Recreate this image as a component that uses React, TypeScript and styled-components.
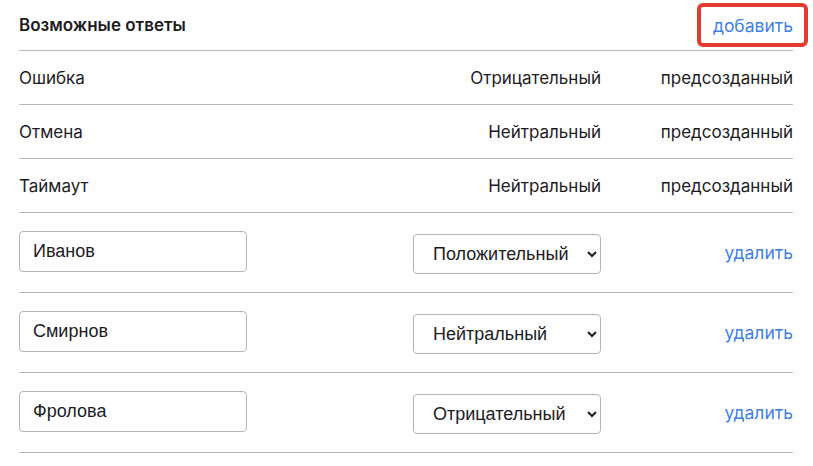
import styled, { createGlobalStyle } from 'styled-components'

const GlobalStyle = createGlobalStyle`
  html, body {
    margin: 0;
    padding: 0;
    background: #ffffff;
  }
  body {
    font-family: Inter, 'Noto Sans', sans-serif;
    color: #1c1c1f;
  }
`

const Page = styled.div`
  padding: 0 20px 0 19px;
`

const Header = styled.div`
  height: 51px;
  display: flex;
  align-items: center;
  justify-content: space-between;
  border-bottom: 1px solid #b6b6be;
  box-sizing: border-box;
`

const Title = styled.h2`
  margin: 0;
  font-size: 17px;
  font-weight: 600;
  letter-spacing: 0;
`

const LinkButton = styled.button<{ highlighted?: boolean }>`
  position: relative;
  background: none;
  border: none;
  padding: 0;
  font-family: Inter, 'Noto Sans', sans-serif;
  font-size: 17.5px;
  color: #3f7fe6;
  cursor: pointer;
  &::after {
    content: '';
    display: ${({ highlighted }) => (highlighted ? 'block' : 'none')};
    position: absolute;
    left: -16px;
    right: -15px;
    top: -12px;
    bottom: -11px;
    border: 4px solid #e23b30;
    border-radius: 6px;
  }
`

const Row = styled.div<{ editable?: boolean }>`
  display: grid;
  grid-template-columns: 1fr 188px 192px;
  align-items: center;
  height: ${({ editable }) => (editable ? '80px' : '54px')};
  border-bottom: 1px solid #b6b6be;
  box-sizing: border-box;
`

const Cell = styled.div<{ align?: 'left' | 'right' }>`
  font-size: 17px;
  font-weight: 400;
  text-align: ${({ align }) => align || 'left'};
`

const TextInput = styled.input`
  width: 228px;
  height: 41px;
  box-sizing: border-box;
  border: 1px solid #b4b4bc;
  border-radius: 4px;
  padding: 0 13px;
  font-family: 'Liberation Sans', Arial, sans-serif;
  font-size: 18px;
  color: #1c1c1f;
  outline: none;
  margin-top: -2px;
`

const Select = styled.select`
  width: 188px;
  height: 40px;
  box-sizing: border-box;
  border: 1px solid #b4b4bc;
  border-radius: 4px;
  padding: 0 6px 0 15px;
  background: #ffffff;
  font-family: 'Liberation Sans', Arial, sans-serif;
  font-size: 18px;
  color: #1c1c1f;
  margin-top: 2px;
`

const ActionCell = styled.div`
  text-align: right;
`

type Preset = { name: string; type: string }
type Custom = { name: string; type: string }

const presets: Preset[] = [
  { name: 'Ошибка', type: 'Отрицательный' },
  { name: 'Отмена', type: 'Нейтральный' },
  { name: 'Таймаут', type: 'Нейтральный' },
]

const customs: Custom[] = [
  { name: 'Иванов', type: 'Положительный' },
  { name: 'Смирнов', type: 'Нейтральный' },
  { name: 'Фролова', type: 'Отрицательный' },
]

const types = ['Положительный', 'Нейтральный', 'Отрицательный']

const App = () => (
  <>
    <GlobalStyle />
    <Page>
      <Header>
        <Title>Возможные ответы</Title>
        <LinkButton highlighted>добавить</LinkButton>
      </Header>
      {presets.map((p) => (
        <Row key={p.name}>
          <Cell>{p.name}</Cell>
          <Cell align="right">{p.type}</Cell>
          <Cell align="right">предсозданный</Cell>
        </Row>
      ))}
      {customs.map((c) => (
        <Row key={c.name} editable>
          <div>
            <TextInput defaultValue={c.name} />
          </div>
          <Select defaultValue={c.type}>
            {types.map((t) => (
              <option key={t} value={t}>
                {t}
              </option>
            ))}
          </Select>
          <ActionCell>
            <LinkButton>удалить</LinkButton>
          </ActionCell>
        </Row>
      ))}
    </Page>
  </>
)

export default App
